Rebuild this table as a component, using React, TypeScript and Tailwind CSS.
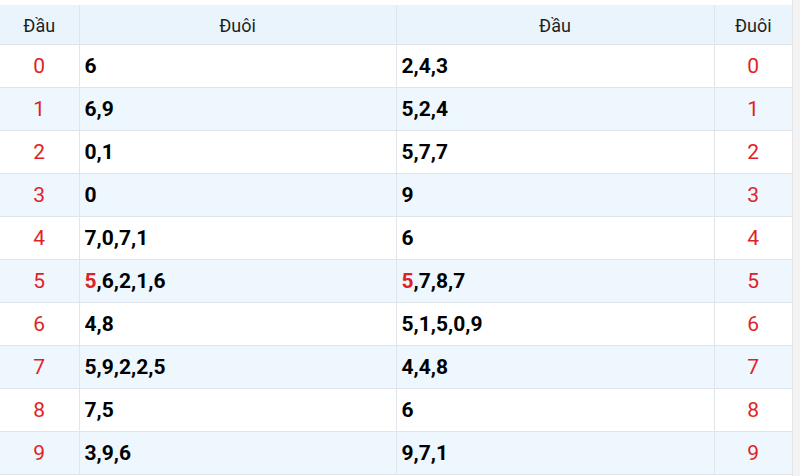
import React from "react";

interface Row {
  head: number;
  tails: string[];
  heads: string[];
}

const rows: Row[] = [
  { head: 0, tails: ["6"], heads: ["2", "4", "3"] },
  { head: 1, tails: ["6", "9"], heads: ["5", "2", "4"] },
  { head: 2, tails: ["0", "1"], heads: ["5", "7", "7"] },
  { head: 3, tails: ["0"], heads: ["9"] },
  { head: 4, tails: ["7", "0", "7", "1"], heads: ["6"] },
  { head: 5, tails: ["*5", "6", "2", "1", "6"], heads: ["*5", "7", "8", "7"] },
  { head: 6, tails: ["4", "8"], heads: ["5", "1", "5", "0", "9"] },
  { head: 7, tails: ["5", "9", "2", "2", "5"], heads: ["4", "4", "8"] },
  { head: 8, tails: ["7", "5"], heads: ["6"] },
  { head: 9, tails: ["3", "9", "6"], heads: ["9", "7", "1"] },
];

// "*" = số đặc biệt, tô đỏ
const Digits: React.FC<{ list: string[] }> = ({ list }) => (
  <>
    {list.map((d, i) => (
      <React.Fragment key={i}>
        {i > 0 && ","}
        {d.startsWith("*") ? (
          <span className="text-[#e01f26]">{d.slice(1)}</span>
        ) : (
          d
        )}
      </React.Fragment>
    ))}
  </>
);

export default function App() {
  return (
    <div
      className="w-[800px] h-[476px] flex overflow-hidden bg-white"
      style={{ fontFamily: "Roboto, 'Liberation Sans', sans-serif" }}
    >
      <div className="w-[792px] pt-[5px]">
        <table className="w-full border-collapse table-fixed">
          <colgroup>
            <col className="w-[79px]" />
            <col className="w-[317px]" />
            <col className="w-[318px]" />
            <col />
          </colgroup>
          <thead>
            <tr className="h-[39px] bg-[#eaf4fd] text-[18px] text-[#1f1f1f]">
              <th className="font-normal border-r border-b border-[#dfe5ea] pt-[2px]">Đầu</th>
              <th className="font-normal border-x border-b border-[#dfe5ea] pt-[2px]">Đuôi</th>
              <th className="font-normal border-x border-b border-[#dfe5ea] pt-[2px]">Đầu</th>
              <th className="font-normal border-l border-b border-[#dfe5ea] pt-[2px]">Đuôi</th>
            </tr>
          </thead>
          <tbody>
            {rows.map((r) => (
              <tr
                key={r.head}
                className={`h-[43px] ${r.head % 2 === 1 ? "bg-[#eef6fe]" : "bg-white"}`}
              >
                <td className="text-center text-[21px] text-[#e01f26] border-r border-b border-[#dfe5ea] pt-[2px]">
                  {r.head}
                </td>
                <td className="pl-[5px] text-[21px] font-bold text-black border-x border-b border-[#dfe5ea] pt-[2px]">
                  <Digits list={r.tails} />
                </td>
                <td className="pl-[5px] text-[21px] font-bold text-black border-x border-b border-[#dfe5ea] pt-[2px]">
                  <Digits list={r.heads} />
                </td>
                <td className="text-center text-[21px] text-[#e01f26] border-l border-b border-[#dfe5ea] pt-[2px]">
                  {r.head}
                </td>
              </tr>
            ))}
          </tbody>
        </table>
      </div>
      <div className="flex-1 bg-[#f3f3f3] border-l border-[#e4e4e4]" />
    </div>
  );
}
